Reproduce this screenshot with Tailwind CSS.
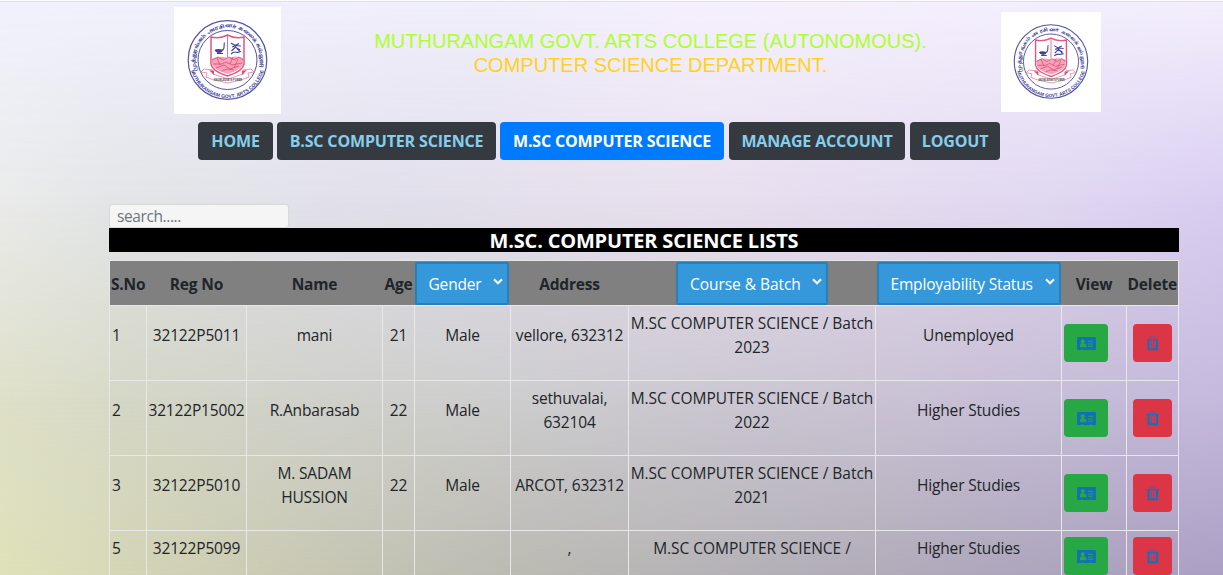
<!DOCTYPE html>
<html lang="en"><head><meta charset="utf-8"><title>M.Sc. Computer Science Lists</title>
<script src="https://cdn.jsdelivr.net/npm/@tailwindcss/browser@4"></script></head>
<body class="relative h-[575px] overflow-hidden font-['Open_Sans','Noto_Sans',sans-serif] text-[15.5px] leading-6 tracking-[-0.17px] text-[#212529]">
<svg class="hidden"><defs>
<symbol id="seal" viewBox="0 0 107 107">
<rect width="107" height="107" fill="#fff"/>
<g fill="none" stroke="#5452a4"><circle cx="53.500" cy="53" r="39.300" stroke-width="1.200"/><circle cx="53.500" cy="53" r="29.500" stroke-width="1"/></g>
<path id="arcTop" d="M23.600 65.100A32.300 32.300 0 1 1 83.400 65.100" fill="none"/>
<path id="arcBottom" d="M16.800 62.800A38 38 0 0 0 90.200 62.800" fill="none"/>
<g fill="#41409b" font-weight="700" letter-spacing="0"><text font-size="5.200" font-family="Noto Sans, sans-serif"><textPath href="#arcTop" startOffset="1" textLength="121" lengthAdjust="spacingAndGlyphs">முத்துரங்கம் அரசினர் கலைக் கல்லூரி</textPath></text>
<text font-size="5" font-family="Liberation Sans, sans-serif"><textPath href="#arcBottom" startOffset="1" textLength="97" lengthAdjust="spacingAndGlyphs">MUTHURANGAM GOVT. ARTS COLLEGE</textPath></text></g>
<path d="M37 30Q46 32 53.500 28Q61 32 70 30V57Q69 64 53.500 69Q38 64 37 57Z" fill="#fff" stroke="#e75480" stroke-width="1.500"/>
<path d="M38 52Q45 48 53 51Q62 48 69 51V57Q67 63 53.500 67Q40 63 38 57Z" fill="#f4a3b8"/>
<path d="M53.500 29V50M38 53l6-3 5 3 6-3 5 3 5-3 4 3M39 57h9l4-2 6 3 10-2M42 61l8-3 6 4 9-3M48 64l5-2 7 1M43 51l3 7M59 50l-3 7M64 52l-4 9" fill="none" stroke="#df4a78" stroke-width=".8"/>
<path d="M43 46.500h6M46 43.500q4 0 4-3l.300-5" fill="none" stroke="#41409b" stroke-width="1.100"/><path d="M40.500 43q3-2 8.500 0-1 3-4 3t-4.500-3z" fill="#41409b"/>
<path d="M57 36l4 2.500 4-2M58 40l4-1.500 5 .500M57.500 44l4-4 4 4M61 40l5 3M57 47q3-3 6-1.500l4-1" fill="none" stroke="#41409b" stroke-width="1.200"/>
<path d="M30 62l-3 3 6 1-1 4 8 3 14 3 13-3 8-3-1-4 6-1-3-3-8 1v4l-15 5-15-5v-4z" fill="#fff" stroke="#ea7897" stroke-width=".8"/>
<path d="M35 63l5 5v-4zM73 63l-5 5v-4z" fill="#e34774"/>
<text x="40" y="74" font-size="2.800" letter-spacing="0" textLength="28" lengthAdjust="spacingAndGlyphs" fill="#444" font-family="Liberation Sans" font-weight="700">KNOWLEDGE IS POWER</text>
</symbol>
<symbol id="card" viewBox="0 0 20 16"><path fill="#1170b8" fill-rule="evenodd" d="M1 1h18q1 0 1 1v13h-4.500a1 1 0 0 0-2 0h-7a1 1 0 0 0-2 0H0V2q0-1 1-1zM6 3.500a2 2 0 0 0-1.500 3.500v1Q3 8 3 10v2h7v-2q0-2-2.500-2V7A2 2 0 0 0 6 3.500zM11.500 5v1H17V5zM11.500 8v1H17V8zM11.500 10.500v1H17v-1z"/></symbol>
<symbol id="trash" viewBox="0 0 13 15"><path d="M4 3.500V2q0-1 1-1h3q1 0 1 1v1.500" fill="none" stroke="#6b559f" stroke-width="1.400"/><path d="M.500 3.700h12" stroke="#3565b0" stroke-width="1.500"/><path d="M2.500 3.700v9.500h8.500V3.700" fill="none" stroke="#1170b8" stroke-width="2"/><path d="M5.500 5.500v7M8 5.500v7" stroke="#4a62ac" stroke-width="1"/></symbol>
<symbol id="chevron" viewBox="0 0 10 7"><path d="M1 1.200l4 4 4-4" fill="none" stroke="#fff" stroke-width="2.100"/></symbol>
</defs></svg>
<div class="absolute inset-0 -z-10 bg-[linear-gradient(to_right,#f2f2fe,#f1effc_40%,#f6f1fe_58%,#f3effd)]">
<div class="absolute inset-0 bg-[linear-gradient(to_right,#eaebea,#e3e5e7_9%,#e1dfeb_33%,#e8dfee_58%,#e1d8f1_85%,#d9cdf1)] [mask-image:linear-gradient(transparent,black_200px)]"></div>
<div class="absolute inset-0 bg-[linear-gradient(to_right,#dee0c8,#d8dac8_9%,#d3d4cd_25%,#cfced2_48%,#cdc5d7_73%,#c5b9dd)] [mask-image:linear-gradient(transparent_200px,black_400px)]"></div>
<div class="absolute inset-0 bg-[linear-gradient(to_right,#dfe1b9,#d0d1b5_18%,#bdbcb4_42%,#b4b1b9_65%,#ab9fc4)] [mask-image:linear-gradient(transparent_400px,black_575px)]"></div>
</div>
<div class="h-[2px] border-b border-[#e0e0e7] bg-[#fafaff]"></div>
<header class="flex h-[112px] pl-[174px]">
<svg class="mt-[5px] size-[107px]"><use href="#seal"/></svg>
<h1 class="ml-[40px] mt-[27px] w-[659px] whitespace-nowrap text-center font-['Liberation_Sans'] text-[20px] leading-6 tracking-normal text-[#adff2f]">MUTHURANGAM GOVT. ARTS COLLEGE (AUTONOMOUS).<br><span class="text-[#ffd21c]">COMPUTER SCIENCE DEPARTMENT.</span></h1>
<svg class="ml-[21px] mt-[10px] size-[100px]"><use href="#seal"/></svg>
</header>
<nav class="ml-[198px] mt-[8px] flex h-[38px] gap-[4px] text-[16px] font-bold tracking-[-0.16px] text-[#87ceeb] [&>a]:flex [&>a]:items-center [&>a]:justify-center [&>a]:whitespace-nowrap [&>a]:rounded-[4px] [&>a]:bg-[#343a40]">
<a class="w-[75px]">HOME</a><a class="w-[219px]">B.SC COMPUTER SCIENCE</a><a class="w-[224px] !bg-[#007bff] text-white">M.SC COMPUTER SCIENCE</a><a class="ml-px w-[176px]">MANAGE ACCOUNT</a><a class="ml-px w-[90px]">LOGOUT</a>
</nav>
<main class="ml-[109px] mt-[44px] w-[1070px]">
<input class="block h-6 w-[180px] rounded-[3px] border border-[#d9d9dc] bg-[#f5f5f5] px-[7px] tracking-[-0.4px] placeholder:text-[#6c757d]" placeholder="search.....">
<h2 class="h-6 bg-black text-center text-[20px] font-bold leading-[26px] tracking-[-0.19px] text-white">M.SC. COMPUTER SCIENCE LISTS</h2>
<table class="mt-[8px] w-[1070px] table-fixed border-collapse border border-[#e8e8e8] bg-[#808080]/3 text-center [&_td]:border [&_td]:border-[#e8e8e8] [&_td]:p-0 [&_td]:align-top [&_td]:pt-[17px]">
<colgroup><col class="w-[37px]"><col class="w-[100px]"><col class="w-[136px]"><col class="w-[32px]"><col class="w-[96px]"><col class="w-[118px]"><col class="w-[247px]"><col class="w-[186px]"><col class="w-[65px]"><col class="w-[52px]"></colgroup>
<thead><tr class="h-[45px] bg-[#808080] [&>th]:whitespace-nowrap [&>th]:p-0 [&>th]:pt-px [&>th]:font-bold">
<th>S.No</th><th>Reg No</th><th>Name</th><th>Age</th>
<th><div class="flex h-[43px] w-[94px] items-center justify-between rounded-[2px] border-2 border-[#2980b9] bg-[#3498db] pl-3 pr-[4px] font-normal text-white"><span>Gender</span><svg class="mb-1 h-[7px] w-[10px]"><use href="#chevron"/></svg></div></th>
<th>Address</th>
<th><div class="mx-auto flex h-[43px] w-[152px] items-center justify-between rounded-[2px] border-2 border-[#2980b9] bg-[#3498db] pl-3 pr-[4px] font-normal text-white"><span class="tracking-[-0.05px]">Course &amp; Batch</span><svg class="mb-1 h-[7px] w-[10px]"><use href="#chevron"/></svg></div></th>
<th><div class="ml-px flex h-[43px] w-[184px] items-center justify-between rounded-[2px] border-2 border-[#2980b9] bg-[#3498db] pl-3 pr-[4px] font-normal text-white"><span>Employability Status</span><svg class="mb-1 h-[7px] w-[10px]"><use href="#chevron"/></svg></div></th>
<th>View</th><th>Delete</th></tr></thead>
<tbody id="rows"></tbody></table>
</main>
<script>
const button = (icon, cls, size) => `<span class="flex h-[38px] items-center justify-center rounded-[4px] ${cls}"><svg class="${size}"><use href="#${icon}"/></svg></span>`;
const students = [
["1","32122P5011","mani","21","Male","vellore, 632312","M.SC COMPUTER SCIENCE / Batch<br>2023","Unemployed"],
["2","32122P15002","R.Anbarasab","22","Male","sethuvalai,<br>632104","M.SC COMPUTER SCIENCE / Batch<br>2022","Higher Studies"],
["3","32122P5010","M. SADAM<br>HUSSION","22","Male","ARCOT, 632312","M.SC COMPUTER SCIENCE / Batch<br>2021","Higher Studies"],
["5","32122P5099","","","",",","M.SC COMPUTER SCIENCE /","Higher Studies"]];
document.getElementById('rows').innerHTML = students.map((s, r) => `<tr class="${r < 3 ? 'h-[75px]' : 'h-[50px]'}">` + s.map((v, c) => {
  const pad = r === 3 || v.includes('<br>') ? '!pt-[5px]' : '';
  return `<td class="${pad} ${c === 0 ? 'text-left' : ''}"><div class="whitespace-nowrap ${c === 0 ? 'pl-[2px]' : ''} ${c === 6 ? 'tracking-[-0.03px]' : ''}">${v}</div></td>`;
}).join('') + `<td class="${r === 3 ? '!pt-[6px]' : '!pt-[18px]'}">${button('card','ml-[2px] w-[44px] bg-[#28a745]','h-[15px] w-[19px]')}</td><td class="${r === 3 ? '!pt-[6px]' : '!pt-[18px]'}">${button('trash','ml-[6px] w-[39px] bg-[#dc3545]','h-[15px] w-[13px]')}</td></tr>`).join('');
</script>
</body></html>
